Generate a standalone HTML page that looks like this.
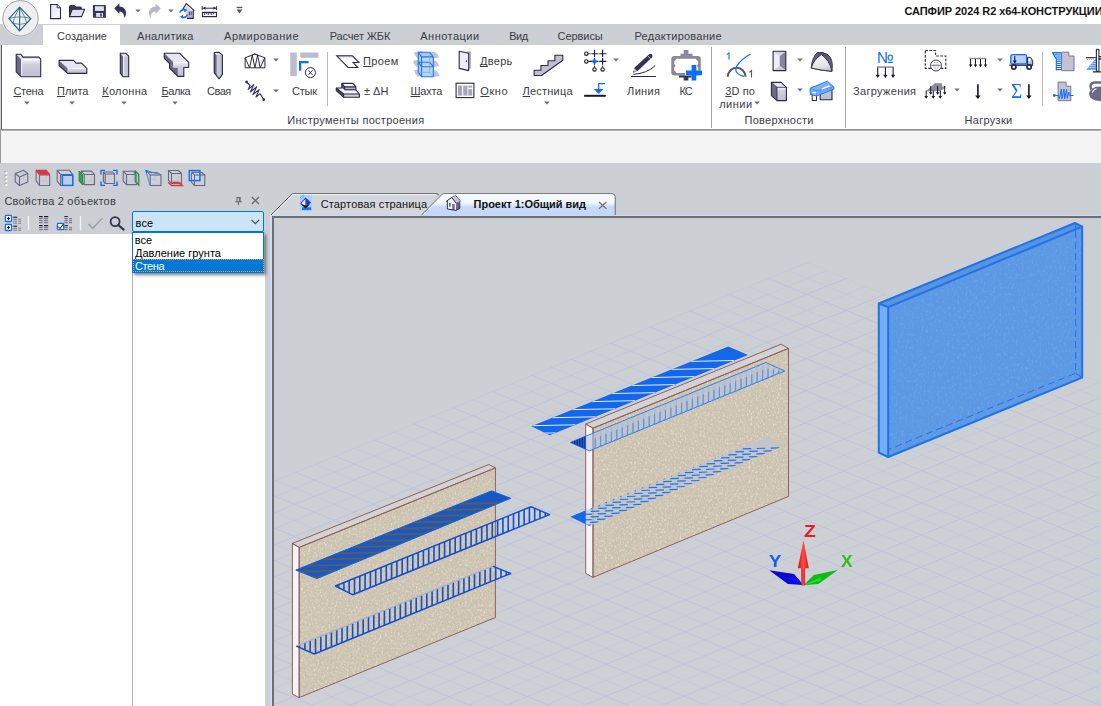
<!DOCTYPE html>
<html><head><meta charset="utf-8"><title>SAPFIR</title>
<style>
html,body{margin:0;padding:0;}
body{width:1101px;height:706px;overflow:hidden;position:relative;background:#cccfd4;font-family:"Liberation Sans",sans-serif;}
.b{position:absolute;display:block;}
.t{position:absolute;white-space:nowrap;font-family:"Liberation Sans",sans-serif;}
.t u{text-decoration:underline;text-underline-offset:1px;text-decoration-thickness:1px;text-decoration-skip-ink:none;}
</style></head><body>
<div class="b" style="left:0px;top:0px;width:1101px;height:24px;background:#ffffff;"></div>
<div class="b" style="left:0px;top:24px;width:1101px;height:21px;background:#cccfd4;"></div>
<div class="b" style="left:0px;top:45px;width:1101px;height:84px;background:#ffffff;"></div>
<div class="b" style="left:0px;top:45px;width:1px;height:84px;background:#d4d4d4;"></div>
<div class="b" style="left:1px;top:45px;width:1px;height:84px;background:#5a5a5a;"></div>
<div class="b" style="left:43px;top:25px;width:77px;height:21px;background:#ffffff;"></div>
<div class="b" style="left:0px;top:129px;width:1101px;height:1px;background:#8e8e8e;"></div>
<div class="b" style="left:0px;top:130px;width:1101px;height:1px;background:#b4b4b4;"></div>
<div class="b" style="left:0px;top:131px;width:1101px;height:32px;background:#f3f3f3;"></div>
<div class="b" style="left:0px;top:131px;width:1px;height:32px;background:#9a9a9a;"></div>
<div class="t" style="left:904.4px;top:5.24px;font-size:11px;line-height:12.64px;letter-spacing:0.000px;color:#151515;font-weight:bold;letter-spacing:-0.06px;">САПФИР 2024 R2 x64-КОНСТРУКЦИИ</div>
<div class="t" style="left:57.0px;top:30.24px;font-size:11px;line-height:12.64px;letter-spacing:0.048px;color:#3b3b45;">Создание</div>
<div class="t" style="left:137.1px;top:30.24px;font-size:11px;line-height:12.64px;letter-spacing:0.239px;color:#3b3b45;">Аналитика</div>
<div class="t" style="left:224.1px;top:30.24px;font-size:11px;line-height:12.64px;letter-spacing:0.484px;color:#3b3b45;">Армирование</div>
<div class="t" style="left:329.7px;top:30.24px;font-size:11px;line-height:12.64px;letter-spacing:-0.133px;color:#3b3b45;">Расчет ЖБК</div>
<div class="t" style="left:420.3px;top:30.24px;font-size:11px;line-height:12.64px;letter-spacing:0.468px;color:#3b3b45;">Аннотации</div>
<div class="t" style="left:509.2px;top:30.24px;font-size:11px;line-height:12.64px;letter-spacing:-0.400px;color:#3b3b45;">Вид</div>
<div class="t" style="left:557.6px;top:30.24px;font-size:11px;line-height:12.64px;letter-spacing:-0.068px;color:#3b3b45;">Сервисы</div>
<div class="t" style="left:634.5px;top:30.24px;font-size:11px;line-height:12.64px;letter-spacing:0.250px;color:#3b3b45;">Редактирование</div>
<div class="t" style="left:13.4px;top:84.74px;font-size:11px;line-height:12.64px;letter-spacing:-0.254px;color:#3b3b45;"><u>С</u>тена</div>
<div class="t" style="left:57.1px;top:84.74px;font-size:11px;line-height:12.64px;letter-spacing:-0.040px;color:#3b3b45;"><u>П</u>лита</div>
<div class="t" style="left:102.2px;top:84.74px;font-size:11px;line-height:12.64px;letter-spacing:0.284px;color:#3b3b45;"><u>К</u>олонна</div>
<div class="t" style="left:161.5px;top:84.74px;font-size:11px;line-height:12.64px;letter-spacing:-0.425px;color:#3b3b45;"><u>Б</u>алка</div>
<div class="t" style="left:207.0px;top:84.74px;font-size:11px;line-height:12.64px;letter-spacing:-0.510px;color:#3b3b45;">Свая</div>
<div class="t" style="left:292.0px;top:84.74px;font-size:11px;line-height:12.64px;letter-spacing:-0.225px;color:#3b3b45;">Стык</div>
<div class="t" style="left:364.0px;top:84.74px;font-size:11px;line-height:12.64px;letter-spacing:0.206px;color:#3b3b45;">± ΔH</div>
<div class="t" style="left:410.4px;top:84.74px;font-size:11px;line-height:12.64px;letter-spacing:-0.162px;color:#3b3b45;"><u>Ш</u>ахта</div>
<div class="t" style="left:480.3px;top:84.74px;font-size:11px;line-height:12.64px;letter-spacing:0.560px;color:#3b3b45;"><u>О</u>кно</div>
<div class="t" style="left:522.6px;top:84.74px;font-size:11px;line-height:12.64px;letter-spacing:0.211px;color:#3b3b45;"><u>Л</u>естница</div>
<div class="t" style="left:627.1px;top:84.74px;font-size:11px;line-height:12.64px;letter-spacing:0.332px;color:#3b3b45;">Линия</div>
<div class="t" style="left:679.4px;top:84.74px;font-size:11px;line-height:12.64px;letter-spacing:-1.014px;color:#3b3b45;">КС</div>
<div class="t" style="left:725.3px;top:84.74px;font-size:11px;line-height:12.64px;letter-spacing:0.102px;color:#3b3b45;"><u>3</u>D по</div>
<div class="t" style="left:853.0px;top:84.74px;font-size:11px;line-height:12.64px;letter-spacing:0.336px;color:#3b3b45;">Загружения</div>
<div class="t" style="left:363.1px;top:55.34px;font-size:11px;line-height:12.64px;letter-spacing:0.336px;color:#3b3b45;"><u>П</u>роем</div>
<div class="t" style="left:480.0px;top:55.34px;font-size:11px;line-height:12.64px;letter-spacing:0.293px;color:#3b3b45;"><u>Д</u>верь</div>
<div class="t" style="left:719.2px;top:97.64px;font-size:11px;line-height:12.64px;letter-spacing:0.495px;color:#3b3b45;">линии</div>
<div class="t" style="left:287.3px;top:113.74px;font-size:11px;line-height:12.64px;letter-spacing:0.287px;color:#3b3b45;">Инструменты построения</div>
<div class="t" style="left:744.6px;top:113.74px;font-size:11px;line-height:12.64px;letter-spacing:0.252px;color:#3b3b45;">Поверхности</div>
<div class="t" style="left:964.6px;top:113.74px;font-size:11px;line-height:12.64px;letter-spacing:0.279px;color:#3b3b45;">Нагрузки</div>
<svg class="b" style="left:24.3px;top:101.0px" width="6" height="4" viewBox="0 0 6 4"><path d="M0.3 0.5h5.4L3 3.4z" fill="#6e6e6e"/></svg>
<svg class="b" style="left:69.2px;top:101.0px" width="6" height="4" viewBox="0 0 6 4"><path d="M0.3 0.5h5.4L3 3.4z" fill="#6e6e6e"/></svg>
<svg class="b" style="left:121.3px;top:101.0px" width="6" height="4" viewBox="0 0 6 4"><path d="M0.3 0.5h5.4L3 3.4z" fill="#6e6e6e"/></svg>
<svg class="b" style="left:172.3px;top:101.0px" width="6" height="4" viewBox="0 0 6 4"><path d="M0.3 0.5h5.4L3 3.4z" fill="#6e6e6e"/></svg>
<svg class="b" style="left:544.3px;top:101.0px" width="6" height="4" viewBox="0 0 6 4"><path d="M0.3 0.5h5.4L3 3.4z" fill="#6e6e6e"/></svg>
<svg class="b" style="left:754.0px;top:101.0px" width="6" height="4" viewBox="0 0 6 4"><path d="M0.3 0.5h5.4L3 3.4z" fill="#6e6e6e"/></svg>
<svg class="b" style="left:273.3px;top:58.4px" width="6" height="4" viewBox="0 0 6 4"><path d="M0.3 0.5h5.4L3 3.4z" fill="#6e6e6e"/></svg>
<svg class="b" style="left:273.3px;top:88.6px" width="6" height="4" viewBox="0 0 6 4"><path d="M0.3 0.5h5.4L3 3.4z" fill="#6e6e6e"/></svg>
<svg class="b" style="left:613.4px;top:58.4px" width="6" height="4" viewBox="0 0 6 4"><path d="M0.3 0.5h5.4L3 3.4z" fill="#6e6e6e"/></svg>
<svg class="b" style="left:797.4px;top:58.4px" width="6" height="4" viewBox="0 0 6 4"><path d="M0.3 0.5h5.4L3 3.4z" fill="#6e6e6e"/></svg>
<svg class="b" style="left:797.4px;top:88.4px" width="6" height="4" viewBox="0 0 6 4"><path d="M0.3 0.5h5.4L3 3.4z" fill="#6e6e6e"/></svg>
<svg class="b" style="left:996.5px;top:58.4px" width="6" height="4" viewBox="0 0 6 4"><path d="M0.3 0.5h5.4L3 3.4z" fill="#6e6e6e"/></svg>
<svg class="b" style="left:996.5px;top:88.4px" width="6" height="4" viewBox="0 0 6 4"><path d="M0.3 0.5h5.4L3 3.4z" fill="#6e6e6e"/></svg>
<svg class="b" style="left:953.5px;top:88.4px" width="6" height="4" viewBox="0 0 6 4"><path d="M0.3 0.5h5.4L3 3.4z" fill="#6e6e6e"/></svg>
<div class="b" style="left:327px;top:52px;width:1px;height:54px;background:#b9b9b9;"></div>
<div class="b" style="left:1042px;top:52px;width:1px;height:54px;background:#b9b9b9;"></div>
<div class="b" style="left:711px;top:47px;width:1px;height:81px;background:#a6a6a6;"></div>
<div class="b" style="left:845px;top:47px;width:1px;height:81px;background:#a6a6a6;"></div>
<div class="b" style="left:0px;top:234px;width:265px;height:472px;background:#ffffff;"></div>
<div class="b" style="left:132px;top:234px;width:1px;height:472px;background:#b4b4b4;"></div>
<div class="t" style="left:4.4px;top:195.04px;font-size:11px;line-height:12.64px;letter-spacing:0.222px;color:#3b3b45;">Свойства 2 объектов</div>
<div class="b" style="left:132px;top:211px;width:132px;height:21px;background:#cce4f7;border:1px solid #0078d7;box-sizing:border-box;border-radius:2px;"></div>
<div class="t" style="left:135.6px;top:217.04px;font-size:11px;line-height:12.64px;letter-spacing:0.087px;color:#000;">все</div>
<svg class="b" style="left:251px;top:219px;" width="9" height="6" viewBox="0 0 9 6"><path d="M0.4 0.8L4.3 4.7L8.2 0.8" fill="none" stroke="#4a4a4a" stroke-width="1.2"/></svg>
<div class="b" style="left:132px;top:232px;width:132px;height:41px;background:#ffffff;border:1px solid #0078d7;box-sizing:border-box;box-shadow:2px 2px 3px rgba(0,0,0,0.5);"></div>
<div class="b" style="left:133px;top:259px;width:131px;height:13.4px;background:#0078d7;outline:1px dotted #f0a050;outline-offset:-1.5px;"></div>
<div class="t" style="left:134.7px;top:234.44px;font-size:11px;line-height:12.64px;letter-spacing:0.087px;color:#000;">все</div>
<div class="t" style="left:135.0px;top:247.44px;font-size:11px;line-height:12.64px;letter-spacing:0.020px;color:#000;">Давление грунта</div>
<div class="t" style="left:135.0px;top:260.34px;font-size:11px;line-height:12.64px;letter-spacing:-0.414px;color:#fff;">Стена</div>
<svg class="b" style="left:234px;top:196px;" width="9" height="10" viewBox="0 0 9 10"><path d="M2.5 1.5h4M3 1.5v4.2M6.2 1.5v4.2M5.3 1.5v4.2M1.2 5.8h6.6M4.5 5.8v3.4" fill="none" stroke="#686868" stroke-width="1"/></svg>
<svg class="b" style="left:251px;top:196px;" width="9" height="9" viewBox="0 0 9 9"><path d="M0.8 1L8 8M8 1L0.8 8" fill="none" stroke="#686868" stroke-width="1.35"/></svg>
<div class="b" style="left:270px;top:215px;width:831px;height:1.4px;background:#c9dcfa;"></div>
<div class="b" style="left:270px;top:215px;width:2.3px;height:491px;background:#c9dcfa;"></div>
<div class="b" style="left:272.3px;top:216.4px;width:829px;height:1.5px;background:#6e6e6e;"></div>
<div class="b" style="left:272.3px;top:216.4px;width:1.7px;height:490px;background:#6e6e6e;"></div>
<svg class="b" style="left:270px;top:191.5px;" width="348" height="24" viewBox="0 0 348 24"><defs><linearGradient id="gt2" x1="0" y1="0" x2="0" y2="1"><stop offset="0" stop-color="#f6fcff"/><stop offset="0.42" stop-color="#f2f8ff"/><stop offset="0.62" stop-color="#c6d9f8"/><stop offset="1" stop-color="#c3d7f8"/></linearGradient></defs>
<path d="M1 23L22.3 1.7H166.5Q168.6 1.7 167.6 3.4L151.5 23Z" fill="#d3d6db"/>
<path d="M1 23L22.3 1.7H166.5Q169 1.7 168 3.2" fill="none" stroke="#5e5e5e" stroke-width="1"/>
<path d="M2.4 23L22.8 2.7H166" fill="none" stroke="#f4f5f7" stroke-width="1"/>
<path d="M151.5 23.4L171.4 3.2Q172.6 1.7 174.6 1.7H342Q345.2 1.7 345.2 5V23.4Z" fill="url(#gt2)"/>
<path d="M151.5 23L171.4 3.2Q172.6 1.7 174.6 1.7H342Q345.2 1.7 345.2 5V23" fill="none" stroke="#6a6a6a" stroke-width="1"/>
<path d="M153 23L172 3.6Q173 2.7 174.6 2.7H341.6Q344.2 2.7 344.2 5" fill="none" stroke="#ffffff" stroke-width="0.9"/></svg>
<div class="t" style="left:320.7px;top:198.04px;font-size:11px;line-height:12.64px;letter-spacing:0.136px;color:#151515;">Стартовая страница</div>
<div class="t" style="left:473.6px;top:198.14px;font-size:11px;line-height:12.64px;letter-spacing:-0.034px;color:#101010;font-weight:bold;">Проект 1:Общий вид</div>
<svg class="b" style="left:598px;top:200.5px;" width="10" height="9" viewBox="0 0 10 9"><path d="M1 1L8.4 7.8M8.4 1L1 7.8" fill="none" stroke="#6f6f6f" stroke-width="1.2"/></svg>
<svg class="b" style="left:299px;top:194px;" width="14" height="18" viewBox="0 0 14 18"><rect x="1" y="1.1" width="12" height="15.7" fill="#a9d1ff"/>
<rect x="3" y="13.3" width="9.2" height="2.8" fill="#1e78f0"/>
<path d="M1 9.4L6.6 3.6L12 8.6L6.6 14Z" fill="#2338dc"/>
<path d="M2.4 9.3L6.4 5.2V12.6Z" fill="#f4f6ff"/>
<path d="M2 10.2L6.6 14.4L11 10.2L6.6 11.4Z" fill="#0e0e52"/>
<path d="M6.4 9.8L7.6 11.2" stroke="#e89030" stroke-width="1"/>
<path d="M1.4 3.6L4.4 0.8M3 4.2L4.8 2.4" stroke="#1e6ae0" stroke-width="0.9" stroke-dasharray="1 0.8"/></svg>
<svg class="b" style="left:445px;top:194px;" width="17" height="18" viewBox="0 0 17 18">
<path d="M1.2 7.3L6.7 3.5L11.2 9.2L10.9 16.4L2.3 15Z" fill="#f1f0f9"/>
<path d="M6.7 3.5L10.4 1.1L15.7 7.3L11.2 9.2Z" fill="#c4c3d8"/>
<path d="M11.2 9.2L14.8 8.3V14.5L10.9 16.4Z" fill="#65637f"/>
<rect x="4" y="8.9" width="1.7" height="3.7" fill="#6b6986"/><rect x="7.3" y="10" width="2.3" height="6" fill="#6b6986"/>
<g fill="none" stroke="#2b2945" stroke-width="1"><path d="M1.2 7.4L6.7 3.5L11.2 9.2"/><path d="M2.3 7V15L10.9 16.4"/></g>
<g fill="none" stroke="#2b2945" stroke-width="0.9" stroke-dasharray="1.2 0.7"><path d="M6.7 3.5L10.4 1.1L15.7 7.3L11.2 9.2"/></g>
<path d="M14.8 8.3V14.5L10.9 16.4" fill="none" stroke="#2b2945" stroke-width="0.9"/></svg>
<svg class="b" style="left:0px;top:0px;" width="42" height="40" viewBox="0 0 42 40">
<circle cx="20.5" cy="18.3" r="18.6" fill="#ffffff" opacity="0.55"/>
<circle cx="20.5" cy="18.3" r="17.7" fill="#efefef" stroke="#98a3b2" stroke-width="1"/>
<g fill="none" stroke="#2a6488" stroke-width="1.1" stroke-linejoin="round">
<path d="M19.6 7.2L30.8 18.6L19.6 30.8L9 18.6Z"/>
<path d="M19.6 7.2V30.8" />
</g>
<g fill="none" stroke="#2a6488" stroke-width="0.7">
<path d="M9 18.6Q19.6 15.2 30.8 18.6"/>
<path d="M13 23.2Q19.6 25.6 26.8 23.2"/>
<path d="M19.6 7.2L14.6 17.4L13 23.2L19.6 30.8"/>
<path d="M19.6 7.2L24.8 17.4L26.8 23.2L19.6 30.8"/>
<path d="M9 18.6L13 23.2M30.8 18.6L26.8 23.2"/>
</g></svg>
<svg class="b" style="left:49px;top:3px;" width="13" height="17" viewBox="0 0 13 17"><defs><linearGradient id="gnew" x1="0" y1="0" x2="1" y2="1"><stop offset="0" stop-color="#e4e4f2"/><stop offset="1" stop-color="#fbfbfe"/></linearGradient></defs>
<path d="M1.6 1.5H8.2L11.5 4.8V15.6H1.6Z" fill="url(#gnew)" stroke="#2d2a4f" stroke-width="1.1" stroke-linejoin="miter"/>
<path d="M8.2 1.5V4.8H11.5" fill="#fff" stroke="#2d2a4f" stroke-width="1"/></svg>
<svg class="b" style="left:68px;top:4px;" width="18" height="14" viewBox="0 0 18 14">
<path d="M1.5 12.3V2.4Q1.5 1.6 2.3 1.6H6.5L7.8 3H12.6Q13.3 3 13.3 3.8V5" fill="#3a3858" stroke="#2d2a4f" stroke-width="1"/>
<path d="M1.5 12.6L4.2 5.2H16.6L13.6 12.6Z" fill="#dedeec" stroke="#2d2a4f" stroke-width="1.1" stroke-linejoin="round"/></svg>
<svg class="b" style="left:92px;top:4px;" width="15" height="15" viewBox="0 0 15 15">
<rect x="0.9" y="1" width="13" height="12.8" rx="0.6" fill="#37355a"/>
<rect x="3" y="2.2" width="8.9" height="4.7" fill="#e0e0ee"/>
<rect x="4.1" y="9" width="6.9" height="3.9" fill="#dcdcea"/>
<rect x="8.2" y="9.5" width="1.6" height="3" fill="#37355a"/></svg>
<svg class="b" style="left:113px;top:2px;" width="15" height="18" viewBox="0 0 15 18">
<path d="M1.2 6.2L6.4 1.4V4.6C10.5 4.8 13 7.6 13 11.2C13 13.2 12.3 14.8 11.3 16C11.3 12.5 10 9.6 6.4 9.5V11.9Z" fill="#34325a"/></svg>
<svg class="b" style="left:134.6px;top:8.8px" width="6" height="4" viewBox="0 0 6 4"><path d="M0.3 0.5h5.4L3 3.4z" fill="#777"/></svg>
<svg class="b" style="left:147px;top:2px;" width="15" height="18" viewBox="0 0 15 18">
<path d="M13.8 6.2L8.6 1.4V4.6C4.5 4.8 2 7.6 2 11.2C2 13.2 2.7 14.8 3.7 16C3.7 12.5 5 9.6 8.6 9.5V11.9Z" fill="#b9b8c8"/></svg>
<svg class="b" style="left:167.5px;top:8.8px" width="6" height="4" viewBox="0 0 6 4"><path d="M0.3 0.5h5.4L3 3.4z" fill="#777"/></svg>
<svg class="b" style="left:178px;top:2px;" width="18" height="18" viewBox="0 0 18 18">
<path d="M4 8.6L8.3 1.6L16.4 8.6" fill="none" stroke="#2d2a4f" stroke-width="1.1"/>
<path d="M6.6 6.2L8.3 3.2L14.8 8.8V16H8.2V6.4Z" fill="#d8d8e6"/>
<path d="M9.4 9.2H14.8V16.2H9.4Z" fill="#b4b3c6"/>
<rect x="11" y="9.6" width="1.2" height="3.6" fill="#55536f"/><rect x="12.9" y="9.6" width="1" height="3.6" fill="#6a6885"/>
<path d="M15.3 8V16.4H9" fill="none" stroke="#2d2a4f" stroke-width="1.1"/>
<g fill="none" stroke="#1e72e8" stroke-width="1.7">
<path d="M2 10.6A4 4 0 0 1 7.6 8"/><path d="M9.4 12.4A4 4 0 0 1 3.6 15"/></g>
<path d="M6.2 6.2L9.6 8.3L6.4 10.2Z" fill="#1e72e8"/><path d="M5.2 16.8L1.8 14.7L5 12.8Z" fill="#1e72e8"/></svg>
<svg class="b" style="left:201px;top:5px;" width="17" height="13" viewBox="0 0 17 13">
<path d="M1.2 1.2V5M15.6 1.2V5M1.6 3.2H15.2" stroke="#2d2a4f" stroke-width="1" fill="none"/>
<path d="M1.8 3.2L4.6 1.6V4.8ZM15.2 3.2L12.4 1.6V4.8Z" fill="#2d2a4f"/>
<rect x="1.5" y="7.4" width="14" height="4.2" fill="#fff" stroke="#2d2a4f" stroke-width="1.2"/>
<path d="M3.6 8V10M5.4 8V9.3M7.2 8V10M9 8V9.3M10.8 8V10M12.6 8V9.3" stroke="#2d2a4f" stroke-width="0.9"/></svg>
<svg class="b" style="left:236px;top:6px;" width="7" height="8" viewBox="0 0 7 8"><rect x="0.7" y="0.8" width="5.6" height="1.4" fill="#555"/><path d="M0.6 3.6H6.4L3.5 7.4Z" fill="#555"/></svg>
<svg width="0" height="0" style="position:absolute"><defs><linearGradient id="gf" x1="0" y1="0" x2="1" y2="0"><stop offset="0" stop-color="#f4f4fa"/><stop offset="0.25" stop-color="#cfcede"/><stop offset="1" stop-color="#bcbbd0"/></linearGradient>
<linearGradient id="gv" x1="0" y1="0" x2="0" y2="1"><stop offset="0" stop-color="#f4f4fa"/><stop offset="0.3" stop-color="#cfcede"/><stop offset="1" stop-color="#c0bfd3"/></linearGradient></defs></svg>
<svg class="b" style="left:14px;top:52px;" width="29" height="27" viewBox="0 0 29 27"><polygon points="2.2,2.2 6.7,2.2 9.0,5.1 24.9,5.1 26.7,7.2 7.2,7.2" fill="#e6e6f1" /><polygon points="2.2,2.2 7.2,7.2 7.2,24.7 2.2,19.9" fill="#6b6986" /><polygon points="7.2,7.2 26.7,7.2 26.7,24.7 7.2,24.7" fill="url(#gv)" /><polygon points="2.2,2.2 6.7,2.2 9.0,5.1 24.9,5.1 26.7,7.2 26.7,24.7 7.2,24.7 2.2,19.9" fill="none" stroke="#2b2945" stroke-width="1.1" stroke-linejoin="round" /><path d="M7.699999999999999 24V7.799999999999997H26" fill="none" stroke="#fff" stroke-width="0.8" opacity="0.9"/></svg>
<svg class="b" style="left:57px;top:58px;" width="32" height="18" viewBox="0 0 32 18"><polygon points="2.1,2.4 16.6,2.4 19.1,5.1 24.6,5.1 29.8,10.3 10.5,10.3" fill="#e6e6f1" /><polygon points="10.5,10.3 29.8,10.3 29.8,15.4 10.5,15.4" fill="url(#gv)" /><polygon points="2.1,2.4 10.5,10.3 10.5,15.4 2.1,7.5" fill="#6b6986" /><polygon points="2.1,2.4 16.6,2.4 19.1,5.1 24.6,5.1 29.8,10.3 29.8,15.4 10.5,15.4 2.1,7.5" fill="none" stroke="#2b2945" stroke-width="1.1" stroke-linejoin="round" /></svg>
<svg class="b" style="left:118px;top:51px;" width="13" height="28" viewBox="0 0 13 28"><polygon points="2.3,2.3 7.7,2.3 10.7,5.2 5.0,5.2" fill="#e6e6f1" /><polygon points="2.3,2.3 5.0,5.2 5.0,25.7 2.3,22.2" fill="#6b6986" /><polygon points="5.0,5.2 10.7,5.2 10.7,25.7 5.0,25.7" fill="url(#gf)" /><polygon points="2.3,2.3 7.7,2.3 10.7,5.2 10.7,25.7 5.0,25.7 2.3,22.2" fill="none" stroke="#2b2945" stroke-width="1.1" stroke-linejoin="round" /></svg>
<svg class="b" style="left:162px;top:51px;" width="29" height="28" viewBox="0 0 29 28"><polygon points="2.3,2.3 17.8,2.3 26.7,11.3 11.4,11.3" fill="#e6e6f1" /><polygon points="2.3,2.3 11.4,11.3 11.4,16.5 2.3,7.3" fill="#6b6986" /><polygon points="7.6,12.4 11.4,16.5 15.9,16.5 15.9,25.4 7.6,17.0" fill="#6b6986" /><polygon points="11.4,11.3 26.7,11.3 26.7,16.5 21.8,16.5 21.8,25.4 15.9,25.4 15.9,16.5 11.4,16.5" fill="url(#gv)" /><polygon points="2.3,2.3 17.8,2.3 26.7,11.3 26.7,16.5 21.8,16.5 21.8,25.4 15.9,25.4 7.6,17.0 7.6,12.6 2.3,7.3" fill="none" stroke="#2b2945" stroke-width="1.1" stroke-linejoin="round" /></svg>
<svg class="b" style="left:212px;top:50px;" width="13" height="31" viewBox="0 0 13 31"><polygon points="2.2,2.5 6.7,2.2 10.4,4.9 10.4,24.3 7.1,28.8 2.2,22.6" fill="url(#gf)" /><polygon points="2.2,2.5 4.6,5.0 4.6,25.6 2.2,22.6" fill="#6b6986" /><polygon points="2.2,2.5 6.7,2.2 10.4,4.9 4.6,5.0" fill="#e6e6f1" /><polygon points="2.2,2.5 6.7,2.2 10.4,4.9 10.4,24.3 7.1,28.8 2.2,22.6" fill="none" stroke="#2b2945" stroke-width="1.1" stroke-linejoin="round" /></svg>
<svg class="b" style="left:243px;top:52px;" width="24" height="18" viewBox="0 0 24 18"><g fill="none" stroke="#2b2945" stroke-width="1" stroke-linejoin="round"><path d="M2.1 15.8V5.8L11.9 2L21.9 5.8V15.8Z"/><path d="M2.1 5.8L6.6 15.8L9.3 3.2M11.9 2L9.3 3.2M11.9 2L14.6 3.2L17.2 15.8L21.9 5.8M9.3 3.2L11.9 15.8L14.6 3.2"/></g></svg>
<svg class="b" style="left:244px;top:80px;" width="22" height="22" viewBox="0 0 22 22"><g fill="none" stroke="#34325a" stroke-width="1.1" stroke-linejoin="round"><path d="M2.6 2L6 5.5L4.2 9.4L9.8 4.6L6.4 12L12.6 6.8L9 14.6L15.2 9.6L12 17L16 13.6L19.8 19.7"/></g><circle cx="2.6" cy="2" r="1.4" fill="#34325a"/><circle cx="19.8" cy="19.7" r="1.4" fill="#34325a"/></svg>
<svg class="b" style="left:289px;top:51px;" width="31" height="28" viewBox="0 0 31 28"><rect x="1.3" y="1.5" width="6.5" height="23.6" fill="#bcbbd0"/><rect x="11.4" y="1.5" width="18" height="5.3" fill="#bcbbd0"/>
<path d="M11.1 19.8V11.2H19.6" fill="none" stroke="#0d6efd" stroke-width="2.3"/>
<circle cx="21.4" cy="21.6" r="5" fill="#fff" stroke="#2b2945" stroke-width="1"/>
<path d="M19.4 19.4L23.4 23.8M23.4 19.4L19.4 23.8" stroke="#2b2945" stroke-width="1" fill="none"/></svg>
<svg class="b" style="left:335px;top:54px;" width="26" height="16" viewBox="0 0 26 16"><path d="M1.8 2.6H17.3" stroke="#c9c8da" stroke-width="1.6"/>
<path d="M1.8 1.8H17.3L23.9 8.3L18.1 8.6L22.8 13.5H13Z" fill="none" stroke="#2b2945" stroke-width="1.1" stroke-linejoin="miter"/></svg>
<svg class="b" style="left:335px;top:82px;" width="26" height="17" viewBox="0 0 26 17"><polygon points="1.3,6.0 6.8,6.0 6.8,1.4 17.9,1.4 20.9,4.9 20.9,7.8 24.4,12.0 24.4,15.2 8.6,15.2 1.3,8.7" fill="#f2f2f8" /><polygon points="9.7,4.9 20.9,4.9 20.9,7.8 9.7,7.8" fill="#b5b4c7" /><polygon points="8.6,12.0 24.4,12.0 24.4,15.2 8.6,15.2" fill="#cfcedd" /><polygon points="1.3,6.0 8.6,12.0 8.6,15.2 1.3,8.7" fill="#55536f" /><polygon points="6.8,1.4 9.7,4.9 9.7,7.8 6.8,6.0" fill="#55536f" /><g fill="none" stroke="#2b2945" stroke-width="1.1" stroke-linejoin="round"><path d="M1.3 6.0 L6.8 6.0 L6.8 1.4 L17.9 1.4 L20.9 4.9 L20.9 7.8 L24.4 12.0 L24.4 15.2 L8.6 15.2 L1.3 8.7Z"/><path d="M9.7 7.8 L9.7 4.9 L20.9 4.9"/><path d="M6.8 1.4 L9.7 4.9"/><path d="M8.6 15.2 L8.6 12.0 L24.4 12.0"/><path d="M1.3 6.0 L8.6 12.0"/><path d="M9.7 7.8 L20.9 7.8"/></g></svg>
<svg class="b" style="left:411px;top:49px;" width="30" height="31" viewBox="0 0 30 31">
<g fill="#c3c2d2"><path d="M3 3.5Q9 1.5 14 3H24Q27 4.5 28 8.5Q22 10.5 17 9H6Q3.5 6.5 3 3.5Z"/>
<path d="M2 12Q8 10 13 11.5H24Q27 13 28 17Q22 19 17 17.5H5Q2.5 15 2 12Z"/>
<path d="M3 21.5Q9 19.5 14 21H24Q27 22.5 28.5 27Q22 29 17 27.5H6.5Q3.5 24.5 3 21.5Z"/></g>
<path d="M7.3 3.3H18.7L22.3 7.9V27.7H10.6L7.3 23.4Z" fill="#a8c8f6" opacity="0.85"/>
<path d="M10.6 7.9H22.3V27.7H10.6Z" fill="#c4dafa" opacity="0.6"/>
<g fill="none" stroke="#1e7af0" stroke-width="1.1" stroke-linejoin="round">
<path d="M7.3 3.3H18.7L22.3 7.9H10.6Z"/><path d="M10.6 7.9V27.7H22.3V7.9"/><path d="M7.3 3.3V23.4L10.6 27.7"/>
<path d="M7.3 13.3L10.6 17.7H22.3"/><path d="M7.3 13.3H18.7L22.3 17.7"/></g>
<g fill="none" stroke="#6fa6f2" stroke-width="0.7"><path d="M18.7 3.3V23.4L22.3 27.7M7.3 23.4H18.7"/></g></svg>
<svg class="b" style="left:457px;top:50px;" width="16" height="22" viewBox="0 0 16 22"><rect x="9.5" y="1.3" width="4.5" height="17.4" fill="#b8b7c9"/>
<path d="M2.2 1.3L11.7 3.3V20.6L2.2 18.4Z" fill="#eeeef6" stroke="#2b2945" stroke-width="1.1" stroke-linejoin="round"/>
<path d="M9.4 10.2V12" stroke="#2b2945" stroke-width="0.9"/></svg>
<svg class="b" style="left:455px;top:82px;" width="20" height="17" viewBox="0 0 20 17"><rect x="1.1" y="1.2" width="17.8" height="14.4" fill="#fff" stroke="#2b2945" stroke-width="1.1"/>
<g fill="#a6a5b9"><rect x="3" y="3.6" width="4" height="10"/><rect x="8.2" y="3.6" width="4.3" height="10"/><rect x="13.3" y="3.6" width="3.9" height="2"/><rect x="13.3" y="7.1" width="3.9" height="6.5"/></g></svg>
<svg class="b" style="left:532px;top:53px;" width="33" height="25" viewBox="0 0 33 25"><polygon points="2.1,22.5 2.1,17.2 8.9,17.2 8.9,12.5 16.0,12.5 16.0,7.8 22.9,7.8 22.9,2.2 30.8,2.2 30.8,7.2 9.5,22.5" fill="#c1c0d3" stroke="#2b2945" stroke-width="1.1" stroke-linejoin="round" /></svg>
<svg class="b" style="left:583px;top:48px;" width="25" height="25" viewBox="0 0 25 25"><g fill="none" stroke="#1f1d33" stroke-width="1.15"><path d="M5.2000000000000455 5.700000000000003H23.399999999999977M5.2000000000000455 13.399999999999999H23.399999999999977M11.5 1.7999999999999972V19.5M19.600000000000023 1.7999999999999972V19.5"/><circle cx="3.3" cy="5.7" r="1.7" fill="#fff"/><circle cx="3.3" cy="13.4" r="1.7" fill="#fff"/><circle cx="11.5" cy="21.4" r="1.7" fill="#fff"/><circle cx="19.6" cy="21.4" r="1.7" fill="#fff"/></g><path d="M15.8 3V16M7.9 3.5V8M8 9.5H23.6M8 17.299999999999997H23.6" stroke="#fff" stroke-width="0.9" fill="none"/><path d="M11.5 10.600000000000001L14.3 13.4L11.5 16.2L8.7 13.4Z" fill="#0d6efd"/></svg>
<svg class="b" style="left:583px;top:82px;" width="24" height="16" viewBox="0 0 24 16"><path d="M1.1 13.8H22.7" stroke="#1a1830" stroke-width="2"/>
<path d="M15.7 7.4V1.6H22" fill="none" stroke="#0d6efd" stroke-width="1.2"/><path d="M10.9 7.1H20.4L15.7 11.9Z" fill="#0d6efd"/></svg>
<svg class="b" style="left:630px;top:52px;" width="28" height="27" viewBox="0 0 28 27"><path d="M1.1 24.5H25.9" stroke="#2b2945" stroke-width="1"/>
<path d="M3.5 22.3Q17 21.5 25.3 13.5" fill="none" stroke="#2b2945" stroke-width="1"/>
<path d="M3.2 20.4L4.6 15.6L19.2 2.2Q20.6 1.2 22 2.6Q23.2 4 22 5.4L7.6 19Z" fill="#34325a"/>
<path d="M3.2 20.4L4.4 16.4L7 18.9Z" fill="#d9d8e6"/><path d="M3.2 20.4L3.7 18.8L4.9 19.9Z" fill="#34325a"/>
<path d="M17.6 3.6L20.6 6.8" stroke="#d9d8e6" stroke-width="0.8"/></svg>
<svg class="b" style="left:669px;top:48px;" width="35" height="34" viewBox="0 0 35 34">
<path d="M14.7 2.1H19.4V5.7H23.5V8H11.5V5.7H14.7Z" fill="#8a899c"/>
<path d="M2.3 11Q2.3 8 5.3 8H28.8Q31.8 8 31.8 11V24.5Q31.8 27.5 28.8 27.5H5.3Q2.3 27.5 2.3 24.5Z" fill="#8a899c"/>
<path d="M5.2 13.4L7.8 10.8H26.6L29.2 13.4V16L28.2 17V18.4L29.2 19.4V22.3L26.6 24.9H7.8L5.2 22.3V19.4L6.2 18.4V17L5.2 16Z" fill="#fff"/>
<path d="M10 27.5H24V29.5H19.4V32.5H14.7V29.5H10Z" fill="#34325a"/>
<path d="M22.6 17.1H16.0V27.3H22.6V33.5H27.3V27.3H34V22.6H27.3V17.1Z" fill="#fff"/>
<path d="M22.6 17.1H27.3V22.6H33V27.3H27.3V32.5H22.6V27.3H17V22.6H22.6Z" fill="#0d6efd"/></svg>
<svg class="b" style="left:725px;top:50px;" width="30" height="30" viewBox="0 0 30 30">
<path d="M2.8 26.7A8.85 8.85 0 0 1 20.5 26.7" fill="none" stroke="#55536f" stroke-width="2"/>
<path d="M25.7 4Q15.5 9.5 11.6 16.4Q9.6 20.4 12.6 23.4Q15.4 25.8 19 26.4" fill="none" stroke="#0d6efd" stroke-width="1.2"/>
<path d="M1.9 4.6L4 2.9V9.6" fill="none" stroke="#0d6efd" stroke-width="1.1"/>
<path d="M24.4 22.4L26.5 20.7V27.6" fill="none" stroke="#55536f" stroke-width="1.1"/></svg>
<svg class="b" style="left:772px;top:50px;" width="15" height="22" viewBox="0 0 15 22"><polygon points="1.1,1.3 7.7,6.0 7.7,16.0 1.1,20.6" fill="#efeef8" /><polygon points="13.8,1.3 7.7,6.0 7.7,16.0 13.8,20.6" fill="#86849c" /><polygon points="1.1,1.3 13.8,1.3 7.7,6.0" fill="#d4d3e2" /><polygon points="1.1,20.6 13.8,20.6 7.7,16.0" fill="#cdccdc" /><polygon points="1.1,1.3 13.8,1.3 13.8,20.6 1.1,20.6" fill="none" stroke="#2b2945" stroke-width="1.1" stroke-linejoin="round" /></svg>
<svg class="b" style="left:809px;top:50px;" width="26" height="24" viewBox="0 0 26 24"><defs><linearGradient id="gd" x1="0.3" y1="0" x2="0.6" y2="1"><stop offset="0" stop-color="#f6f6f9"/><stop offset="0.7" stop-color="#e3e3ea"/><stop offset="1" stop-color="#c4c4cf"/></linearGradient>
<linearGradient id="gdk" x1="0" y1="0" x2="1" y2="0"><stop offset="0" stop-color="#77758f"/><stop offset="0.5" stop-color="#4a4863"/><stop offset="1" stop-color="#6b6986"/></linearGradient></defs>
<path d="M2.2 18Q3.2 7 8.5 2.5Q13 1.6 18 4.2Q24.8 8 23 21.3Q12 20.6 2.2 18Z" fill="url(#gdk)" stroke="#2b2945" stroke-width="0.9" stroke-linejoin="round"/>
<path d="M2.2 18Q5 9 12.4 4.6Q20.5 10 23 21.3Q11 20.4 2.2 18Z" fill="url(#gd)" stroke="#2b2945" stroke-width="0.9" stroke-linejoin="round"/></svg>
<svg class="b" style="left:770px;top:81px;" width="18" height="21" viewBox="0 0 18 21"><polygon points="1.4,1.4 11.1,1.4 16.4,6.3 7.0,6.3" fill="#e6e6f1" /><polygon points="1.4,1.4 7.0,6.3 7.0,19.6 1.4,14.6" fill="#6b6986" /><polygon points="7.0,6.3 16.4,6.3 16.4,19.6 7.0,19.6" fill="url(#gv)" /><polygon points="1.4,1.4 11.1,1.4 16.4,6.3 16.4,19.6 7.0,19.6 1.4,14.6" fill="none" stroke="#2b2945" stroke-width="1.1" stroke-linejoin="round" /><path d="M1.4 1.4L7 6.3H16.4M7 6.3V19.6" fill="none" stroke="#2b2945" stroke-width="0.8"/></svg>
<svg class="b" style="left:808px;top:79px;" width="28" height="23" viewBox="0 0 28 23">
<rect x="4.2" y="13.2" width="4.3" height="8.3" fill="#fff" stroke="#2b2945" stroke-width="1"/>
<path d="M12.2 9.7V20.8H24V8" fill="#c1c0d3" stroke="#2b2945" stroke-width="1.1"/>
<path d="M2.1 9.3L19.4 2.2L25.9 8.1V10.1L8.5 17.1L2.3 15.5Z" fill="#6aa5f8" fill-opacity="0.85" stroke="#1e7af0" stroke-width="1" stroke-linejoin="round"/>
<path d="M2.1 9.3L8.5 11.6L25.9 8.1M8.5 11.6V17.1" fill="none" stroke="#3d8bf4" stroke-width="0.8"/>
<path d="M13.6 10.1L21.7 6.9" stroke="#ffffff" stroke-width="1.5"/>
<path d="M4.2 13.6H8.4" stroke="#ffffff" stroke-width="1.2"/></svg>
<div class="t" style="left:876.6px;top:49.12px;font-size:16px;line-height:18.38px;letter-spacing:0.236px;color:#0d6efd;text-decoration:none;">№</div>
<svg class="b" style="left:874px;top:64px;" width="23" height="15" viewBox="0 0 23 15"><rect x="2.9" y="2.3" width="16.9" height="1.5" fill="#8a899c"/><path d="M3.7 3.6V12.9" stroke="#17152b" stroke-width="1.1" fill="none"/><path d="M1.6 10.7H5.8L3.7 13.9Z" fill="#17152b"/><path d="M11.4 3.6V12.9" stroke="#17152b" stroke-width="1.1" fill="none"/><path d="M9.3 10.7H13.5L11.4 13.9Z" fill="#17152b"/><path d="M19.1 3.6V12.9" stroke="#17152b" stroke-width="1.1" fill="none"/><path d="M17.0 10.7H21.2L19.1 13.9Z" fill="#17152b"/></svg>
<svg class="b" style="left:923px;top:48px;" width="26" height="26" viewBox="0 0 26 26"><path d="M2.3 2.5H12.6V8H22.8V20.4H2.3Z" fill="none" stroke="#2b2945" stroke-width="1.1" stroke-dasharray="2.6 1.5"/>
<circle cx="13" cy="17.5" r="5.5" fill="#fff" stroke="#2b2945" stroke-width="0.9"/>
<path d="M8.6 17.4H17.4" stroke="#8a899c" stroke-width="1.5"/><path d="M11 14.6H15M10.4 20H15.6" stroke="#8a899c" stroke-width="0.8" stroke-dasharray="1 0.6"/></svg>
<svg class="b" style="left:923px;top:81px;" width="25" height="19" viewBox="0 0 25 19"><polygon points="2.9,10.3 11.8,2.3 19.0,2.3 19.0,5.6 22.4,5.6 22.4,7.0 16.5,10.3" fill="#8a899c" /><path d="M7.7 5.0V12.8" stroke="#17152b" stroke-width="1" fill="none"/><path d="M6.0 11.2H9.4L7.7 13.8Z" fill="#17152b"/><path d="M14.6 5.0V12.8" stroke="#17152b" stroke-width="1" fill="none"/><path d="M12.9 11.2H16.3L14.6 13.8Z" fill="#17152b"/><path d="M21.7 5.0V12.8" stroke="#17152b" stroke-width="1" fill="none"/><path d="M20.0 11.2H23.4L21.7 13.8Z" fill="#17152b"/><path d="M3.2 9.5V16.7" stroke="#17152b" stroke-width="1" fill="none"/><path d="M1.4 14.9H5.0L3.2 17.7Z" fill="#17152b"/><path d="M10.3 9.5V16.7" stroke="#17152b" stroke-width="1" fill="none"/><path d="M8.5 14.9H12.1L10.3 17.7Z" fill="#17152b"/><path d="M17.3 9.5V16.7" stroke="#17152b" stroke-width="1" fill="none"/><path d="M15.5 14.9H19.1L17.3 17.7Z" fill="#17152b"/></svg>
<svg class="b" style="left:968px;top:56px;" width="20" height="13" viewBox="0 0 20 13"><rect x="1.6" y="1.8" width="16.8" height="1.4" fill="#8a899c"/><path d="M2.6 3.0V10.2" stroke="#17152b" stroke-width="1" fill="none"/><path d="M0.9 8.6H4.3L2.6 11.2Z" fill="#17152b"/><path d="M7.5 3.0V10.2" stroke="#17152b" stroke-width="1" fill="none"/><path d="M5.8 8.6H9.2L7.5 11.2Z" fill="#17152b"/><path d="M12.5 3.0V10.2" stroke="#17152b" stroke-width="1" fill="none"/><path d="M10.8 8.6H14.2L12.5 11.2Z" fill="#17152b"/><path d="M17.5 3.0V10.2" stroke="#17152b" stroke-width="1" fill="none"/><path d="M15.8 8.6H19.2L17.5 11.2Z" fill="#17152b"/></svg>
<svg class="b" style="left:1008px;top:52px;" width="27" height="20" viewBox="0 0 27 20">
<path d="M1.3 13.2H24.8" stroke="#2b2945" stroke-width="1.3"/>
<rect x="2.8" y="2.6" width="15.8" height="9.4" rx="1.6" fill="#b7d1fa" stroke="#0d6efd" stroke-width="1.3"/>
<path d="M19.4 5.4H22.6L24.7 8.6V13H19.4Z" fill="#b5b4c6" stroke="#2b2945" stroke-width="1"/>
<rect x="20.7" y="6.3" width="1.7" height="3.2" fill="#fff"/>
<path d="M6.8 4.2V10.4" stroke="#17152b" stroke-width="1.1" fill="none"/><path d="M4.9 8.6H8.7L6.8 11.4Z" fill="#17152b"/>
<circle cx="5.8" cy="15" r="2.1" fill="#fff" stroke="#2b2945" stroke-width="1.8"/><circle cx="21.1" cy="15" r="2.1" fill="#fff" stroke="#2b2945" stroke-width="1.8"/></svg>
<svg class="b" style="left:974px;top:83px;" width="8" height="17" viewBox="0 0 8 17"><path d="M3.9 1.2V15.1" stroke="#17152b" stroke-width="1.6" fill="none"/><path d="M1.2 12.5H6.6L3.9 16.1Z" fill="#17152b"/></svg>
<div class="t" style="left:1010.8px;top:79.2px;font-family:'Liberation Serif',serif;font-size:21px;line-height:24px;color:#0d6efd;transform:scaleX(0.92);transform-origin:0 0;">Σ</div>
<svg class="b" style="left:1025px;top:83px;" width="8" height="17" viewBox="0 0 8 17"><path d="M3.9 1.2V15.1" stroke="#17152b" stroke-width="1.6" fill="none"/><path d="M1.2 12.5H6.6L3.9 16.1Z" fill="#17152b"/></svg>
<svg class="b" style="left:1051px;top:50px;" width="25" height="23" viewBox="0 0 25 23"><polygon points="10.6,2.2 17.8,2.2 17.8,6.0 23.0,6.0 23.0,20.7 10.6,20.7" fill="#c4c3d5" stroke="#77758f" stroke-width="1" stroke-linejoin="round" /><path d="M1.5 2.8H10.2" stroke="#0d6efd" stroke-width="1.5"/><path d="M2.8 4.9H10.2" stroke="#0d6efd" stroke-width="1.15"/><path d="M4.1 7.0H10.2" stroke="#0d6efd" stroke-width="1.15"/><path d="M5.3 9.1H10.2" stroke="#0d6efd" stroke-width="1.15"/><path d="M5.3 11.2H10.2" stroke="#0d6efd" stroke-width="1.15"/><path d="M5.3 13.3H10.2" stroke="#0d6efd" stroke-width="1.15"/><path d="M5.3 15.4H10.2" stroke="#0d6efd" stroke-width="1.15"/><path d="M5.3 17.5H10.2" stroke="#0d6efd" stroke-width="1.15"/><path d="M5.3 19.6H10.2" stroke="#0d6efd" stroke-width="1.15"/><path d="M1.2 2.3L5.3 9.0V20.4" fill="none" stroke="#0d6efd" stroke-width="1.1"/></svg>
<svg class="b" style="left:1084px;top:48px;" width="17" height="26" viewBox="0 0 17 26"><path d="M2.2 9.6H12" stroke="#2b2945" stroke-width="1"/><path d="M2.6 10.2l1.1 1.5M4.6 10.2l1.1 1.5M6.6 10.2l1.1 1.5M8.6 10.2l1.1 1.5" stroke="#2b2945" stroke-width="0.6"/>
<path d="M2.2 21.8L12.2 10V21.8Z" fill="#4d95f7"/>
<path d="M4.4 19.6H12M6 17.6H12M7.8 15.6H12M9.6 13.6H12" stroke="#dce9fd" stroke-width="0.7"/>
<rect x="12.4" y="1.4" width="2.5" height="21.8" fill="#fff" stroke="#2b2945" stroke-width="1.1"/>
<path d="M9 23.9H17M14.9 8.7H17M14.9 11H17" stroke="#2b2945" stroke-width="1.3" fill="none"/></svg>
<svg class="b" style="left:1052px;top:81px;" width="23" height="21" viewBox="0 0 23 21"><polygon points="6.1,1.1 14.1,1.1 14.1,5.2 18.8,5.2 18.8,19.7 6.1,19.7" fill="#c4c3d5" stroke="#77758f" stroke-width="1" stroke-linejoin="round" /><path d="M2.3 14.5H6.6L7.4 17.6L9.4 8L10.0 17.8L12.0 8L12.6 17.8L14.6 8.4L15.2 17.4L16.8 11.0L17.4 14.5H21.5" fill="none" stroke="#0d6efd" stroke-width="1" stroke-linejoin="round"/><circle cx="2.3" cy="14.5" r="1.4" fill="#0d6efd"/></svg>
<svg class="b" style="left:1086px;top:79px;" width="15" height="24" viewBox="0 0 15 24"><path d="M5.2 10.5Q2.6 3.6 9 3.5H15" fill="none" stroke="#6b6986" stroke-width="2.5"/>
<ellipse cx="13.4" cy="14.8" rx="10.4" ry="7.2" fill="#6b6986"/><path d="M6.4 13.2Q7.4 10.6 10 9.8" fill="none" stroke="#e8e7f0" stroke-width="1.3" stroke-linecap="round"/></svg>
<svg class="b" style="left:0;top:0" width="212" height="192" viewBox="0 0 212 192"><rect x="4.6" y="171" width="2" height="2" fill="#9ea3ab"/><rect x="5.4" y="171.8" width="2" height="2" fill="#fff"/><rect x="4.6" y="175" width="2" height="2" fill="#9ea3ab"/><rect x="5.4" y="175.8" width="2" height="2" fill="#fff"/><rect x="4.6" y="179" width="2" height="2" fill="#9ea3ab"/><rect x="5.4" y="179.8" width="2" height="2" fill="#fff"/><rect x="4.6" y="183" width="2" height="2" fill="#9ea3ab"/><rect x="5.4" y="183.8" width="2" height="2" fill="#fff"/><g fill="none" stroke="#c3c2d6" stroke-width="0.9"><path d="M23.5 170.2V178.6L15.2 181.8M23.5 178.6L27.8 182"/></g><g fill="none" stroke="#6b6986" stroke-width="1.1" stroke-linejoin="round"><path d="M15.2 173.5L23.5 170.2L27.8 173.5V182L19.5 185.5L15.2 181.8Z"/><path d="M15.2 173.5L19.5 177L27.8 173.5M19.5 177V185.5"/></g><path d="M46.300000000000004 170.4V180.9H36.1M46.300000000000004 180.9L49.7 185.5" fill="none" stroke="#c3c2d6" stroke-width="0.9"/><g fill="none" stroke="#6b6986" stroke-width="1.1" stroke-linejoin="round"><rect x="39.5" y="175" width="10.2" height="10.5"/><path d="M39.5 175L36.1 170.4H46.300000000000004L49.7 175M36.1 170.4V180.9L39.5 185.5"/></g><path d="M36.2 170.4H46.4L49.7 174.4H39.5Z" fill="#e8323c" stroke="#e8323c" stroke-width="0.8"/><g fill="none" stroke="#6b6986" stroke-width="1.1" stroke-linejoin="round"><rect x="60.6" y="174.6" width="12.2" height="10.9"/><path d="M60.6 174.6L57.2 170.2H69.39999999999999L72.8 174.6M57.2 170.2V181.1L60.6 185.5"/></g><rect x="62.4" y="175.3" width="10.3" height="10.1" fill="#bccdf4" stroke="#0d6efd" stroke-width="1.4"/><path d="M91.5 171.1V181.2H81.2M91.5 181.2L94.5 184.6" fill="none" stroke="#c3c2d6" stroke-width="0.9"/><g fill="none" stroke="#6b6986" stroke-width="1.1" stroke-linejoin="round"><rect x="84.2" y="174.5" width="10.3" height="10.1"/><path d="M84.2 174.5L81.2 171.1H91.5L94.5 174.5M81.2 171.1V181.2L84.2 184.6"/></g><path d="M79.1 171L82.6 174.8V185L79.1 181Z" fill="#35a055" stroke="#1f8f43" stroke-width="1"/><g fill="none" stroke="#6b6986" stroke-width="1.1" stroke-linejoin="round"><rect x="105.2" y="174" width="9.3" height="9.5"/><path d="M105.2 174L103.4 172H112.7L114.5 174M103.4 172V181.5L105.2 183.5"/></g><g fill="none" stroke="#0d6efd" stroke-width="1.4"><path d="M101 174.4V170.4H105M113 170.4H117V174.4M117 181.4V185.4H113M105 185.4H101V181.4"/></g><path d="M133.2 171.2V181.29999999999998H123.2M133.2 181.29999999999998L136.5 184.6" fill="none" stroke="#c3c2d6" stroke-width="0.9"/><g fill="none" stroke="#6b6986" stroke-width="1.1" stroke-linejoin="round"><rect x="126.5" y="174.5" width="10.0" height="10.1"/><path d="M126.5 174.5L123.2 171.2H133.2L136.5 174.5M123.2 171.2V181.29999999999998L126.5 184.6"/></g><path d="M135.2 171L138.8 174.6V185L135.2 181.5Z" fill="#9fb5a8" fill-opacity="0.5" stroke="#1f8f43" stroke-width="1.2"/><g fill="none" stroke="#c3c2d6" stroke-width="0.9"><path d="M155 179.5L161 185.5M155 179.5V175M155 179.5H150.2"/></g><rect x="150.2" y="175" width="10.8" height="10.5" fill="none" stroke="#6b6986" stroke-width="1.1"/><path d="M148 172.6H157.4L161 175M148 172.6L150.2 175" fill="none" stroke="#6b6986" stroke-width="1"/><g fill="none" stroke="#3a83f2" stroke-width="1"><path d="M145.6 170.2L150.2 185.5M145.6 170.2L161 175"/></g><path d="M145.2 169.8L148.6 171.6L146.4 173.4Z" fill="#0d6efd"/><path d="M178.5 170.5V180.4H168.5M178.5 180.4L181.5 183.4" fill="none" stroke="#c3c2d6" stroke-width="0.9"/><g fill="none" stroke="#6b6986" stroke-width="1.1" stroke-linejoin="round"><rect x="171.5" y="173.5" width="10.0" height="9.9"/><path d="M171.5 173.5L168.5 170.5H178.5L181.5 173.5M168.5 170.5V180.4L171.5 183.4"/></g><path d="M168.2 182.2L171.6 185.5H182.2L178.6 182.2" fill="none" stroke="#e8323c" stroke-width="1.5"/><path d="M172.5 182.4H179" stroke="#e8323c" stroke-width="1.4"/><rect x="189.3" y="170.6" width="10.6" height="10" fill="#c8d9fa" stroke="#0d6efd" stroke-width="1.5"/><g fill="none" stroke="#6b6986" stroke-width="1.1"><rect x="194.5" y="175" width="10.3" height="10.5"/><path d="M191.5 172.4H201.6L204.8 175M191.5 172.4V182.4L194.5 185.5M191.5 172.4L194.5 175"/></g></svg>
<svg class="b" style="left:0;top:0" width="130" height="236" viewBox="0 0 130 236"><rect x="5.4" y="215.4" width="6.1" height="6.1" rx="0.8" fill="#fff" stroke="#0d6efd" stroke-width="1.3"/><path d="M6.9 218.45000000000002H10M8.45 216.9V220.0" stroke="#000" stroke-width="1.1"/><path d="M13.2 217.20000000000002H17.1" stroke="#1f1d33" stroke-width="1.1"/><path d="M13.2 219.20000000000002H17.1M18.3 219.20000000000002H21" stroke="#7c7b90" stroke-width="1"/><path d="M13.2 221.20000000000002H17.1M18.3 221.20000000000002H21" stroke="#7c7b90" stroke-width="1"/><path d="M13.2 223.20000000000002H17.1M18.3 223.20000000000002H21" stroke="#7c7b90" stroke-width="1"/><rect x="5.4" y="224.4" width="6.1" height="6.1" rx="0.8" fill="#fff" stroke="#0d6efd" stroke-width="1.3"/><path d="M6.9 227.45000000000002H10M8.45 225.9V229.0" stroke="#000" stroke-width="1.1"/><path d="M13.2 226.20000000000002H17.1" stroke="#1f1d33" stroke-width="1.1"/><path d="M13.2 228.20000000000002H17.1M18.3 228.20000000000002H21" stroke="#7c7b90" stroke-width="1"/><path d="M13.2 230.20000000000002H17.1M18.3 230.20000000000002H21" stroke="#7c7b90" stroke-width="1"/><rect x="27.8" y="216" width="1.4" height="14" fill="#f3f3f5"/><rect x="79.8" y="216" width="1.4" height="14" fill="#f3f3f5"/><path d="M39 216.6H42.7M43.9 216.6H48.2" stroke="#1f1d33" stroke-width="1.05"/><path d="M39 218.6H42.7M43.9 218.6H48.2" stroke="#7c7b90" stroke-width="1.05"/><path d="M39 220.6H42.7M43.9 220.6H48.2" stroke="#7c7b90" stroke-width="1.05"/><path d="M39 222.6H42.7M43.9 222.6H48.2" stroke="#7c7b90" stroke-width="1.05"/><path d="M39 225.6H42.7M43.9 225.6H48.2" stroke="#1f1d33" stroke-width="1.05"/><path d="M39 227.6H42.7M43.9 227.6H48.2" stroke="#7c7b90" stroke-width="1.05"/><path d="M39 229.6H42.7M43.9 229.6H48.2" stroke="#7c7b90" stroke-width="1.05"/><path d="M64.4 216.6H67.9" stroke="#1f1d33" stroke-width="1.05"/><path d="M64.4 218.6H67.9M69 218.6H72" stroke="#7c7b90" stroke-width="1.05"/><path d="M64.4 220.6H67.9M69 220.6H72" stroke="#7c7b90" stroke-width="1.05"/><path d="M64.4 222.6H67.9M69 222.6H72" stroke="#7c7b90" stroke-width="1.05"/><path d="M64.4 225.6H67.9" stroke="#1f1d33" stroke-width="1.05"/><path d="M64.4 227.6H67.9M69 227.6H72" stroke="#7c7b90" stroke-width="1.05"/><path d="M64.4 229.6H67.9M69 229.6H72" stroke="#7c7b90" stroke-width="1.05"/><rect x="57.4" y="223.4" width="6.3" height="6.3" rx="0.8" fill="#fff" stroke="#0d6efd" stroke-width="1.3"/><path d="M58.4 226.6L60 228.6L63.2 224.2" fill="none" stroke="#000" stroke-width="1"/><path d="M88 224.4L89.4 223.4L92.6 227.2L101.8 218L102.8 218.6L92.9 229.6Z" fill="#9d9cae"/><circle cx="115.1" cy="221.6" r="4.5" fill="none" stroke="#34325a" stroke-width="1.8"/><path d="M118.3 225L123.6 229.6" stroke="#34325a" stroke-width="2.3" stroke-linecap="round"/></svg>
<svg class="b" style="left:274px;top:218px" width="827" height="488" viewBox="274 218 827 488"><defs>
<linearGradient id="vbg" x1="0" y1="0" x2="0" y2="1"><stop offset="0" stop-color="#cbced3"/><stop offset="1" stop-color="#cdd0d5"/></linearGradient>
<filter id="stone" x="0" y="0" width="100%" height="100%" color-interpolation-filters="sRGB">
 <feTurbulence type="fractalNoise" baseFrequency="0.55 0.42" numOctaves="2" seed="7" result="n"/>
 <feColorMatrix in="n" type="matrix" values="0 0 0 0 0  0 0 0 0 0  0 0 0 0 0  1.6 1.6 0 0 -1.55" result="a"/>
 <feFlood flood-color="#e8e1d8" result="lt"/><feComposite in="lt" in2="a" operator="in" result="spk"/>
 <feTurbulence type="fractalNoise" baseFrequency="0.45 0.4" numOctaves="2" seed="23" result="n2"/>
 <feColorMatrix in="n2" type="matrix" values="0 0 0 0 0  0 0 0 0 0  0 0 0 0 0  0 1.2 1.2 0 -1.2" result="a2"/>
 <feFlood flood-color="#c2b9a7" result="dk"/><feComposite in="dk" in2="a2" operator="in" result="dks"/>
 <feMerge><feMergeNode in="SourceGraphic"/><feMergeNode in="dks"/><feMergeNode in="spk"/></feMerge>
 <feComposite in2="SourceGraphic" operator="in"/>
</filter>
<filter id="bluestone" x="0" y="0" width="100%" height="100%" color-interpolation-filters="sRGB">
 <feTurbulence type="fractalNoise" baseFrequency="0.5 0.3" numOctaves="2" seed="11" result="n"/>
 <feColorMatrix in="n" type="matrix" values="0 0 0 0 0  0 0 0 0 0  0 0 0 0 0  1.4 1.4 0 0 -1.35" result="a"/>
 <feFlood flood-color="#6fa6ea" result="lt"/><feComposite in="lt" in2="a" operator="in" result="spk"/>
 <feMerge><feMergeNode in="SourceGraphic"/><feMergeNode in="spk"/></feMerge>
 <feComposite in2="SourceGraphic" operator="in"/>
</filter>
</defs><rect x="274" y="218" width="827" height="488" fill="url(#vbg)"/><clipPath id="gridclip"><polygon points="807.2,262.3 274.0,481.0 274.0,706.0 1101.0,706.0 1101.0,382.8"/></clipPath><g fill="none" clip-path="url(#gridclip)"><path d="M274 129.7L1101 -209.4" stroke="#b2b0e6" stroke-opacity="0.38" stroke-width="1"/><path d="M274 -214.9L1101 124.2" stroke="#b2b0e6" stroke-opacity="0.38" stroke-width="1"/><path d="M274 145.6L1101 -193.4" stroke="#b2b0e6" stroke-opacity="0.18" stroke-width="1"/><path d="M274 -198.7L1101 140.4" stroke="#b2b0e6" stroke-opacity="0.18" stroke-width="1"/><path d="M274 161.6L1101 -177.5" stroke="#b2b0e6" stroke-opacity="0.38" stroke-width="1"/><path d="M274 -182.6L1101 156.5" stroke="#b2b0e6" stroke-opacity="0.38" stroke-width="1"/><path d="M274 177.6L1101 -161.5" stroke="#b2b0e6" stroke-opacity="0.18" stroke-width="1"/><path d="M274 -166.4L1101 172.7" stroke="#b2b0e6" stroke-opacity="0.18" stroke-width="1"/><path d="M274 193.5L1101 -145.5" stroke="#b2b0e6" stroke-opacity="0.38" stroke-width="1"/><path d="M274 -150.3L1101 188.8" stroke="#b2b0e6" stroke-opacity="0.38" stroke-width="1"/><path d="M274 209.5L1101 -129.6" stroke="#b2b0e6" stroke-opacity="0.18" stroke-width="1"/><path d="M274 -134.1L1101 205.0" stroke="#b2b0e6" stroke-opacity="0.18" stroke-width="1"/><path d="M274 225.5L1101 -113.6" stroke="#b2b0e6" stroke-opacity="0.38" stroke-width="1"/><path d="M274 -118.0L1101 221.1" stroke="#b2b0e6" stroke-opacity="0.38" stroke-width="1"/><path d="M274 241.4L1101 -97.6" stroke="#b2b0e6" stroke-opacity="0.18" stroke-width="1"/><path d="M274 -101.8L1101 237.3" stroke="#b2b0e6" stroke-opacity="0.18" stroke-width="1"/><path d="M274 257.4L1101 -81.7" stroke="#b2b0e6" stroke-opacity="0.38" stroke-width="1"/><path d="M274 -85.7L1101 253.4" stroke="#b2b0e6" stroke-opacity="0.38" stroke-width="1"/><path d="M274 273.4L1101 -65.7" stroke="#b2b0e6" stroke-opacity="0.18" stroke-width="1"/><path d="M274 -69.5L1101 269.6" stroke="#b2b0e6" stroke-opacity="0.18" stroke-width="1"/><path d="M274 289.4L1101 -49.7" stroke="#b2b0e6" stroke-opacity="0.38" stroke-width="1"/><path d="M274 -53.4L1101 285.7" stroke="#b2b0e6" stroke-opacity="0.38" stroke-width="1"/><path d="M274 305.3L1101 -33.7" stroke="#b2b0e6" stroke-opacity="0.18" stroke-width="1"/><path d="M274 -37.2L1101 301.9" stroke="#b2b0e6" stroke-opacity="0.18" stroke-width="1"/><path d="M274 321.3L1101 -17.8" stroke="#b2b0e6" stroke-opacity="0.38" stroke-width="1"/><path d="M274 -21.1L1101 318.0" stroke="#b2b0e6" stroke-opacity="0.38" stroke-width="1"/><path d="M274 337.3L1101 -1.8" stroke="#b2b0e6" stroke-opacity="0.18" stroke-width="1"/><path d="M274 -4.9L1101 334.2" stroke="#b2b0e6" stroke-opacity="0.18" stroke-width="1"/><path d="M274 353.2L1101 14.2" stroke="#b2b0e6" stroke-opacity="0.38" stroke-width="1"/><path d="M274 11.2L1101 350.3" stroke="#b2b0e6" stroke-opacity="0.38" stroke-width="1"/><path d="M274 369.2L1101 30.1" stroke="#b2b0e6" stroke-opacity="0.18" stroke-width="1"/><path d="M274 27.4L1101 366.5" stroke="#b2b0e6" stroke-opacity="0.18" stroke-width="1"/><path d="M274 385.2L1101 46.1" stroke="#b2b0e6" stroke-opacity="0.38" stroke-width="1"/><path d="M274 43.5L1101 382.6" stroke="#b2b0e6" stroke-opacity="0.38" stroke-width="1"/><path d="M274 401.2L1101 62.1" stroke="#b2b0e6" stroke-opacity="0.18" stroke-width="1"/><path d="M274 59.7L1101 398.8" stroke="#b2b0e6" stroke-opacity="0.18" stroke-width="1"/><path d="M274 417.1L1101 78.0" stroke="#b2b0e6" stroke-opacity="0.38" stroke-width="1"/><path d="M274 75.8L1101 414.9" stroke="#b2b0e6" stroke-opacity="0.38" stroke-width="1"/><path d="M274 433.1L1101 94.0" stroke="#b2b0e6" stroke-opacity="0.18" stroke-width="1"/><path d="M274 92.0L1101 431.1" stroke="#b2b0e6" stroke-opacity="0.18" stroke-width="1"/><path d="M274 449.1L1101 110.0" stroke="#b2b0e6" stroke-opacity="0.38" stroke-width="1"/><path d="M274 108.1L1101 447.2" stroke="#b2b0e6" stroke-opacity="0.38" stroke-width="1"/><path d="M274 465.0L1101 126.0" stroke="#b2b0e6" stroke-opacity="0.18" stroke-width="1"/><path d="M274 124.3L1101 463.4" stroke="#b2b0e6" stroke-opacity="0.18" stroke-width="1"/><path d="M274 481.0L1101 141.9" stroke="#b2b0e6" stroke-opacity="0.38" stroke-width="1"/><path d="M274 140.4L1101 479.5" stroke="#b2b0e6" stroke-opacity="0.38" stroke-width="1"/><path d="M274 497.0L1101 157.9" stroke="#b2b0e6" stroke-opacity="0.18" stroke-width="1"/><path d="M274 156.6L1101 495.7" stroke="#b2b0e6" stroke-opacity="0.18" stroke-width="1"/><path d="M274 512.9L1101 173.9" stroke="#b2b0e6" stroke-opacity="0.38" stroke-width="1"/><path d="M274 172.7L1101 511.8" stroke="#b2b0e6" stroke-opacity="0.38" stroke-width="1"/><path d="M274 528.9L1101 189.8" stroke="#b2b0e6" stroke-opacity="0.18" stroke-width="1"/><path d="M274 188.9L1101 528.0" stroke="#b2b0e6" stroke-opacity="0.18" stroke-width="1"/><path d="M274 544.9L1101 205.8" stroke="#b2b0e6" stroke-opacity="0.38" stroke-width="1"/><path d="M274 205.0L1101 544.1" stroke="#b2b0e6" stroke-opacity="0.38" stroke-width="1"/><path d="M274 560.8L1101 221.8" stroke="#b2b0e6" stroke-opacity="0.18" stroke-width="1"/><path d="M274 221.2L1101 560.3" stroke="#b2b0e6" stroke-opacity="0.18" stroke-width="1"/><path d="M274 576.8L1101 237.8" stroke="#b2b0e6" stroke-opacity="0.38" stroke-width="1"/><path d="M274 237.3L1101 576.4" stroke="#b2b0e6" stroke-opacity="0.38" stroke-width="1"/><path d="M274 592.8L1101 253.7" stroke="#b2b0e6" stroke-opacity="0.18" stroke-width="1"/><path d="M274 253.5L1101 592.6" stroke="#b2b0e6" stroke-opacity="0.18" stroke-width="1"/><path d="M274 608.8L1101 269.7" stroke="#b2b0e6" stroke-opacity="0.38" stroke-width="1"/><path d="M274 269.6L1101 608.7" stroke="#b2b0e6" stroke-opacity="0.38" stroke-width="1"/><path d="M274 624.7L1101 285.7" stroke="#b2b0e6" stroke-opacity="0.18" stroke-width="1"/><path d="M274 285.8L1101 624.9" stroke="#b2b0e6" stroke-opacity="0.18" stroke-width="1"/><path d="M274 640.7L1101 301.6" stroke="#b2b0e6" stroke-opacity="0.38" stroke-width="1"/><path d="M274 301.9L1101 641.0" stroke="#b2b0e6" stroke-opacity="0.38" stroke-width="1"/><path d="M274 656.7L1101 317.6" stroke="#b2b0e6" stroke-opacity="0.18" stroke-width="1"/><path d="M274 318.1L1101 657.2" stroke="#b2b0e6" stroke-opacity="0.18" stroke-width="1"/><path d="M274 672.6L1101 333.6" stroke="#b2b0e6" stroke-opacity="0.38" stroke-width="1"/><path d="M274 334.2L1101 673.3" stroke="#b2b0e6" stroke-opacity="0.38" stroke-width="1"/><path d="M274 688.6L1101 349.5" stroke="#b2b0e6" stroke-opacity="0.18" stroke-width="1"/><path d="M274 350.4L1101 689.5" stroke="#b2b0e6" stroke-opacity="0.18" stroke-width="1"/><path d="M274 704.6L1101 365.5" stroke="#b2b0e6" stroke-opacity="0.38" stroke-width="1"/><path d="M274 366.5L1101 705.6" stroke="#b2b0e6" stroke-opacity="0.38" stroke-width="1"/><path d="M274 720.5L1101 381.5" stroke="#b2b0e6" stroke-opacity="0.18" stroke-width="1"/><path d="M274 382.7L1101 721.8" stroke="#b2b0e6" stroke-opacity="0.18" stroke-width="1"/><path d="M274 736.5L1101 397.4" stroke="#b2b0e6" stroke-opacity="0.38" stroke-width="1"/><path d="M274 398.8L1101 737.9" stroke="#b2b0e6" stroke-opacity="0.38" stroke-width="1"/><path d="M274 752.5L1101 413.4" stroke="#b2b0e6" stroke-opacity="0.18" stroke-width="1"/><path d="M274 415.0L1101 754.1" stroke="#b2b0e6" stroke-opacity="0.18" stroke-width="1"/><path d="M274 768.5L1101 429.4" stroke="#b2b0e6" stroke-opacity="0.38" stroke-width="1"/><path d="M274 431.1L1101 770.2" stroke="#b2b0e6" stroke-opacity="0.38" stroke-width="1"/><path d="M274 784.4L1101 445.4" stroke="#b2b0e6" stroke-opacity="0.18" stroke-width="1"/><path d="M274 447.3L1101 786.4" stroke="#b2b0e6" stroke-opacity="0.18" stroke-width="1"/><path d="M274 800.4L1101 461.3" stroke="#b2b0e6" stroke-opacity="0.38" stroke-width="1"/><path d="M274 463.4L1101 802.5" stroke="#b2b0e6" stroke-opacity="0.38" stroke-width="1"/><path d="M274 816.4L1101 477.3" stroke="#b2b0e6" stroke-opacity="0.18" stroke-width="1"/><path d="M274 479.6L1101 818.7" stroke="#b2b0e6" stroke-opacity="0.18" stroke-width="1"/><path d="M274 832.3L1101 493.3" stroke="#b2b0e6" stroke-opacity="0.38" stroke-width="1"/><path d="M274 495.7L1101 834.8" stroke="#b2b0e6" stroke-opacity="0.38" stroke-width="1"/><path d="M274 848.3L1101 509.2" stroke="#b2b0e6" stroke-opacity="0.18" stroke-width="1"/><path d="M274 511.9L1101 851.0" stroke="#b2b0e6" stroke-opacity="0.18" stroke-width="1"/><path d="M274 864.3L1101 525.2" stroke="#b2b0e6" stroke-opacity="0.38" stroke-width="1"/><path d="M274 528.0L1101 867.1" stroke="#b2b0e6" stroke-opacity="0.38" stroke-width="1"/><path d="M274 880.2L1101 541.2" stroke="#b2b0e6" stroke-opacity="0.18" stroke-width="1"/><path d="M274 544.2L1101 883.3" stroke="#b2b0e6" stroke-opacity="0.18" stroke-width="1"/><path d="M274 896.2L1101 557.1" stroke="#b2b0e6" stroke-opacity="0.38" stroke-width="1"/><path d="M274 560.3L1101 899.4" stroke="#b2b0e6" stroke-opacity="0.38" stroke-width="1"/><path d="M274 912.2L1101 573.1" stroke="#b2b0e6" stroke-opacity="0.18" stroke-width="1"/><path d="M274 576.5L1101 915.6" stroke="#b2b0e6" stroke-opacity="0.18" stroke-width="1"/><path d="M274 928.2L1101 589.1" stroke="#b2b0e6" stroke-opacity="0.38" stroke-width="1"/><path d="M274 592.6L1101 931.7" stroke="#b2b0e6" stroke-opacity="0.38" stroke-width="1"/><path d="M274 944.1L1101 605.1" stroke="#b2b0e6" stroke-opacity="0.18" stroke-width="1"/><path d="M274 608.8L1101 947.9" stroke="#b2b0e6" stroke-opacity="0.18" stroke-width="1"/><path d="M274 960.1L1101 621.0" stroke="#b2b0e6" stroke-opacity="0.38" stroke-width="1"/><path d="M274 624.9L1101 964.0" stroke="#b2b0e6" stroke-opacity="0.38" stroke-width="1"/><path d="M274 976.1L1101 637.0" stroke="#b2b0e6" stroke-opacity="0.18" stroke-width="1"/><path d="M274 641.1L1101 980.2" stroke="#b2b0e6" stroke-opacity="0.18" stroke-width="1"/><path d="M274 992.0L1101 653.0" stroke="#b2b0e6" stroke-opacity="0.38" stroke-width="1"/><path d="M274 657.2L1101 996.3" stroke="#b2b0e6" stroke-opacity="0.38" stroke-width="1"/><path d="M274 1008.0L1101 668.9" stroke="#b2b0e6" stroke-opacity="0.18" stroke-width="1"/><path d="M274 673.4L1101 1012.5" stroke="#b2b0e6" stroke-opacity="0.18" stroke-width="1"/><path d="M274 1024.0L1101 684.9" stroke="#b2b0e6" stroke-opacity="0.38" stroke-width="1"/><path d="M274 689.5L1101 1028.6" stroke="#b2b0e6" stroke-opacity="0.38" stroke-width="1"/><path d="M274 1040.0L1101 700.9" stroke="#b2b0e6" stroke-opacity="0.18" stroke-width="1"/><path d="M274 705.7L1101 1044.8" stroke="#b2b0e6" stroke-opacity="0.18" stroke-width="1"/><path d="M274 1055.9L1101 716.9" stroke="#b2b0e6" stroke-opacity="0.38" stroke-width="1"/><path d="M274 721.8L1101 1060.9" stroke="#b2b0e6" stroke-opacity="0.38" stroke-width="1"/><path d="M274 1071.9L1101 732.8" stroke="#b2b0e6" stroke-opacity="0.18" stroke-width="1"/><path d="M274 738.0L1101 1077.1" stroke="#b2b0e6" stroke-opacity="0.18" stroke-width="1"/><path d="M274 1087.9L1101 748.8" stroke="#b2b0e6" stroke-opacity="0.38" stroke-width="1"/><path d="M274 754.1L1101 1093.2" stroke="#b2b0e6" stroke-opacity="0.38" stroke-width="1"/><path d="M274 1103.8L1101 764.8" stroke="#b2b0e6" stroke-opacity="0.18" stroke-width="1"/><path d="M274 770.3L1101 1109.4" stroke="#b2b0e6" stroke-opacity="0.18" stroke-width="1"/><path d="M274 1119.8L1101 780.7" stroke="#b2b0e6" stroke-opacity="0.38" stroke-width="1"/><path d="M274 786.4L1101 1125.5" stroke="#b2b0e6" stroke-opacity="0.38" stroke-width="1"/><path d="M274 1135.8L1101 796.7" stroke="#b2b0e6" stroke-opacity="0.18" stroke-width="1"/><path d="M274 802.6L1101 1141.7" stroke="#b2b0e6" stroke-opacity="0.18" stroke-width="1"/><path d="M274 1151.7L1101 812.7" stroke="#b2b0e6" stroke-opacity="0.38" stroke-width="1"/><path d="M274 818.7L1101 1157.8" stroke="#b2b0e6" stroke-opacity="0.38" stroke-width="1"/><path d="M274 1167.7L1101 828.6" stroke="#b2b0e6" stroke-opacity="0.18" stroke-width="1"/><path d="M274 834.9L1101 1174.0" stroke="#b2b0e6" stroke-opacity="0.18" stroke-width="1"/><path d="M274 1183.7L1101 844.6" stroke="#b2b0e6" stroke-opacity="0.38" stroke-width="1"/><path d="M274 851.0L1101 1190.1" stroke="#b2b0e6" stroke-opacity="0.38" stroke-width="1"/><path d="M274 1199.7L1101 860.6" stroke="#b2b0e6" stroke-opacity="0.18" stroke-width="1"/><path d="M274 867.2L1101 1206.3" stroke="#b2b0e6" stroke-opacity="0.18" stroke-width="1"/><path d="M274 1215.6L1101 876.6" stroke="#b2b0e6" stroke-opacity="0.38" stroke-width="1"/><path d="M274 883.3L1101 1222.4" stroke="#b2b0e6" stroke-opacity="0.38" stroke-width="1"/><path d="M274 1231.6L1101 892.5" stroke="#b2b0e6" stroke-opacity="0.18" stroke-width="1"/><path d="M274 899.5L1101 1238.6" stroke="#b2b0e6" stroke-opacity="0.18" stroke-width="1"/><path d="M274 1247.6L1101 908.5" stroke="#b2b0e6" stroke-opacity="0.38" stroke-width="1"/><path d="M274 915.6L1101 1254.7" stroke="#b2b0e6" stroke-opacity="0.38" stroke-width="1"/><path d="M274 1263.5L1101 924.5" stroke="#b2b0e6" stroke-opacity="0.18" stroke-width="1"/><path d="M274 931.8L1101 1270.9" stroke="#b2b0e6" stroke-opacity="0.18" stroke-width="1"/><path d="M274 1279.5L1101 940.4" stroke="#b2b0e6" stroke-opacity="0.38" stroke-width="1"/><path d="M274 947.9L1101 1287.0" stroke="#b2b0e6" stroke-opacity="0.38" stroke-width="1"/><path d="M274 1295.5L1101 956.4" stroke="#b2b0e6" stroke-opacity="0.18" stroke-width="1"/><path d="M274 964.1L1101 1303.2" stroke="#b2b0e6" stroke-opacity="0.18" stroke-width="1"/><path d="M274 1311.4L1101 972.4" stroke="#b2b0e6" stroke-opacity="0.38" stroke-width="1"/><path d="M274 980.2L1101 1319.3" stroke="#b2b0e6" stroke-opacity="0.38" stroke-width="1"/><path d="M274 1327.4L1101 988.3" stroke="#b2b0e6" stroke-opacity="0.18" stroke-width="1"/><path d="M274 996.4L1101 1335.5" stroke="#b2b0e6" stroke-opacity="0.18" stroke-width="1"/><path d="M274 1343.4L1101 1004.3" stroke="#b2b0e6" stroke-opacity="0.38" stroke-width="1"/><path d="M274 1012.5L1101 1351.6" stroke="#b2b0e6" stroke-opacity="0.38" stroke-width="1"/><path d="M274 1359.4L1101 1020.3" stroke="#b2b0e6" stroke-opacity="0.18" stroke-width="1"/><path d="M274 1028.7L1101 1367.8" stroke="#b2b0e6" stroke-opacity="0.18" stroke-width="1"/><path d="M274 1375.3L1101 1036.2" stroke="#b2b0e6" stroke-opacity="0.38" stroke-width="1"/><path d="M274 1044.8L1101 1383.9" stroke="#b2b0e6" stroke-opacity="0.38" stroke-width="1"/><path d="M274 1391.3L1101 1052.2" stroke="#b2b0e6" stroke-opacity="0.18" stroke-width="1"/><path d="M274 1061.0L1101 1400.1" stroke="#b2b0e6" stroke-opacity="0.18" stroke-width="1"/></g><polygon points="531.3,426.2 549.7,435.3 748.0,354.9 728.2,346.4" fill="#1467e8"/><clipPath id="cp1"><polygon points="531.3,426.2 549.7,435.3 748.0,354.9 728.2,346.4"/></clipPath><g clip-path="url(#cp1)"><path d="M555.6 432.9L512.7 433.7M575.5 424.8L532.5 425.7M595.3 416.8L552.4 417.7M615.1 408.8L572.2 409.6M635.0 400.7L592.0 401.6M654.8 392.7L611.9 393.5M674.6 384.6L631.7 385.5M694.5 376.6L651.5 377.5M714.3 368.6L671.4 369.4M734.1 360.5L691.2 361.4" fill="none" stroke="#e4edff" stroke-width="1.0"/></g><polygon points="593.0,428.2 788.5,348.4 788.5,496.4 593.0,577.4" fill="#cdc4b1" filter="url(#stone)"/><polygon points="585.7,424.0 781.1,344.2 788.5,348.4 593.0,428.2" fill="#d3d3d6"/><polygon points="585.7,424.0 593.0,428.2 593.0,577.4 585.7,573.4" fill="#f6f5f5"/><g fill="none" stroke="#8e625d" stroke-width="1" stroke-linejoin="round"><polygon points="593.0,428.2 788.5,348.4 788.5,496.4 593.0,577.4"/><polygon points="585.7,424.0 781.1,344.2 788.5,348.4 593.0,428.2"/><polygon points="585.7,424.0 593.0,428.2 593.0,577.4 585.7,573.4"/></g><polygon points="570.4,442.4 589.3,450.9 784.8,371.0 765.9,362.5" fill="#b4c2d8" fill-opacity="0.62" stroke="#2f7fee" stroke-width="1"/><path d="M595.2 438.4V448.5h-1.6M600.6 436.2V446.3h-1.6M606.0 434.0V444.1h-1.6M611.4 431.8V441.9h-1.6M616.8 429.6V439.6h-1.6M622.2 427.4V437.4h-1.6M627.6 425.2V435.2h-1.6M633.0 423.0V433.0h-1.6M638.4 420.8V430.8h-1.6M643.8 418.6V428.6h-1.6M649.2 416.3V426.4h-1.6M654.6 414.1V424.2h-1.6M660.0 411.9V422.0h-1.6M665.4 409.7V419.8h-1.6M670.8 407.5V417.6h-1.6M676.2 405.3V415.4h-1.6M681.6 403.1V413.2h-1.6M687.0 400.9V411.0h-1.6M692.4 398.7V408.7h-1.6M697.8 396.5V406.5h-1.6M703.2 394.3V404.3h-1.6M708.6 392.1V402.1h-1.6M714.0 389.9V399.9h-1.6M719.4 387.7V397.7h-1.6M724.8 385.4V395.5h-1.6M730.2 383.2V393.3h-1.6M735.6 381.0V391.1h-1.6M741.0 378.8V388.9h-1.6M746.4 376.6V386.7h-1.6M751.8 374.4V384.5h-1.6M757.2 372.2V382.3h-1.6M762.6 370.0V380.1h-1.6M768.0 368.9V377.8h-1.6M773.4 369.6V375.6h-1.6M778.8 370.3V373.4h-1.6" fill="none" stroke="#2a7af0" stroke-width="1.0"/><path d="M595.2 432.2V448.5h-1.6M600.6 430.0V446.3h-1.6M606.0 427.8V444.1h-1.6M611.4 425.6V441.9h-1.6M616.8 423.4V439.6h-1.6M622.2 421.2V437.4h-1.6M627.6 419.0V435.2h-1.6M633.0 416.8V433.0h-1.6M638.4 414.6V430.8h-1.6M643.8 412.4V428.6h-1.6M649.2 410.2V426.4h-1.6M654.6 408.0V424.2h-1.6M660.0 405.8V422.0h-1.6M665.4 403.6V419.8h-1.6M670.8 401.4V417.6h-1.6M676.2 399.1V415.4h-1.6M681.6 396.9V413.2h-1.6M687.0 394.7V411.0h-1.6M692.4 392.5V408.7h-1.6M697.8 390.3V406.5h-1.6M703.2 388.1V404.3h-1.6M708.6 385.9V402.1h-1.6M714.0 383.7V399.9h-1.6M719.4 381.5V397.7h-1.6M724.8 379.3V395.5h-1.6M730.2 377.1V393.3h-1.6M735.6 374.9V391.1h-1.6M741.0 372.7V388.9h-1.6M746.4 370.5V386.7h-1.6M751.8 368.2V384.5h-1.6M757.2 366.0V382.3h-1.6M762.6 363.8V380.1h-1.6M768.0 363.5V377.8h-1.6M773.4 365.9V375.6h-1.6M778.8 368.3V373.4h-1.6" fill="none" stroke="#8fb0e6" stroke-width="1.0" stroke-opacity="0.45"/><polygon points="570.4,516.8 589.3,525.9 784.8,445.5 766.4,437.0" fill="#bfc4cc" fill-opacity="0.75"/><clipPath id="cp2"><polygon points="570.4,516.8 589.3,525.9 784.8,445.5 766.4,437.0"/></clipPath><g clip-path="url(#cp2)"><path d="M569.5 534.1L524.7 535.4M576.7 531.1L532.0 532.4M583.9 528.1L539.3 529.4M591.2 525.1L546.6 526.5M598.4 522.2L554.0 523.5M605.6 519.2L561.3 520.5M612.9 516.2L568.6 517.5M620.1 513.2L575.9 514.6M627.3 510.3L583.2 511.6M634.6 507.3L590.5 508.6M641.8 504.3L597.8 505.6M649.0 501.3L605.1 502.7M656.3 498.4L612.5 499.7M663.5 495.4L619.8 496.7M670.7 492.4L627.1 493.7M678.0 489.4L634.4 490.7M685.2 486.5L641.7 487.8M692.4 483.5L649.0 484.8M699.7 480.5L656.3 481.8M706.9 477.5L663.6 478.8M714.1 474.6L671.0 475.9M721.4 471.6L678.3 472.9M728.6 468.6L685.6 469.9M735.8 465.6L692.9 466.9M743.1 462.7L700.2 464.0M750.3 459.7L707.5 461.0M757.5 456.7L714.8 458.0M764.8 453.7L722.1 455.0M772.0 450.8L729.5 452.0M779.2 447.8L736.8 449.1" fill="none" stroke="#1e74f0" stroke-width="1.2" stroke-dasharray="8.5 5.5"/></g><polygon points="570.4,442.4 585.7,449.3 585.7,436.1" fill="#1a5fd6"/><clipPath id="cp3"><polygon points="570.4,442.4 585.7,449.3 585.7,436.1"/></clipPath><g clip-path="url(#cp3)"><path d="M572.0 441.8V443.1M574.6 440.7V444.3M577.2 439.6V445.4M579.8 438.6V446.6M582.4 437.5V447.8M585.0 436.4V448.9" fill="none" stroke="#12307a" stroke-width="1.2"/></g><polygon points="570.4,516.8 585.7,524.2 585.7,510.6" fill="#1467e8"/><polygon points="299.2,547.4 495.4,467.9 495.4,617.5 299.2,697.6" fill="#cdc4b1" filter="url(#stone)"/><polygon points="292.4,543.4 488.8,464.5 495.4,467.9 299.2,547.4" fill="#d3d3d6"/><polygon points="292.4,543.4 299.2,547.4 299.2,697.6 292.4,694.1" fill="#f6f5f5"/><g fill="none" stroke="#8e625d" stroke-width="1" stroke-linejoin="round"><polygon points="299.2,547.4 495.4,467.9 495.4,617.5 299.2,697.6"/><polygon points="292.4,543.4 488.8,464.5 495.4,467.9 299.2,547.4"/><polygon points="292.4,543.4 299.2,547.4 299.2,697.6 292.4,694.1"/></g><polygon points="295.8,570.1 316.9,578.6 510.7,498.3 491.5,490.9" fill="#1a57c6"/><clipPath id="cp4"><polygon points="295.8,570.1 316.9,578.6 510.7,498.3 491.5,490.9"/></clipPath><g clip-path="url(#cp4)"><path d="M320.5 577.1L276.3 578.0M335.4 570.9L291.6 571.8M350.3 564.8L306.8 565.6M365.2 558.6L322.1 559.4M380.1 552.4L337.4 553.3M395.0 546.2L352.7 547.1M409.9 540.1L368.0 540.9M424.8 533.9L383.2 534.7M439.7 527.7L398.5 528.5M454.6 521.5L413.8 522.3M469.6 515.3L429.1 516.2M484.5 509.2L444.4 510.0M499.4 503.0L459.7 503.8" fill="none" stroke="#5f5f49" stroke-width="1.8"/></g><polygon points="295.8,570.1 316.9,578.6 510.7,498.3 491.5,490.9" fill="none" stroke="#1460e0" stroke-width="1"/><path d="M338.6 584.7V587.6M343.9 582.6V590.3M349.2 580.4V593.0M354.5 578.3V593.9M359.8 576.1V591.8M365.1 574.0V589.6M370.4 571.8V587.5M375.7 569.7V585.3M381.0 567.5V583.2M386.3 565.4V581.0M391.6 563.2V578.8M396.9 561.1V576.7M402.2 558.9V574.5M407.5 556.8V572.4M412.8 554.6V570.2M418.1 552.5V568.1M423.4 550.3V565.9M428.7 548.2V563.8M434.0 546.0V561.6M439.3 543.9V559.4M444.6 541.7V557.3M449.9 539.6V555.1M455.2 537.4V553.0M460.5 535.3V550.8M465.8 533.1V548.7M471.1 531.0V546.5M476.4 528.8V544.3M481.7 526.7V542.2M487.0 524.5V540.0M492.3 522.4V537.9M497.6 520.2V535.7M502.9 518.1V533.6M508.2 516.0V531.4M513.5 513.8V529.3M518.8 511.7V527.1M524.1 509.5V524.9M529.4 507.4V522.8M534.7 508.3V520.6M540.0 510.5V518.5M545.3 512.8V516.3" fill="none" stroke="#114fcc" stroke-width="1.6"/><polygon points="335.4,586.0 352.6,594.7 549.5,514.6 531.0,506.7" fill="none" stroke="#114fcc" stroke-width="1.5" stroke-linejoin="round"/><path d="M299.6 644.8V647.5M304.9 642.6V649.8M310.2 640.5V652.2M315.5 638.3V653.5M320.8 636.2V651.3M326.1 634.0V649.2M331.4 631.9V647.0M336.7 629.7V644.8M342.0 627.5V642.7M347.3 625.4V640.5M352.6 623.2V638.3M357.9 621.1V636.1M363.2 618.9V634.0M368.5 616.7V631.8M373.8 614.6V629.6M379.1 612.4V627.4M384.4 610.3V625.3M389.7 608.1V623.1M395.0 605.9V620.9M400.3 603.8V618.8M405.6 601.6V616.6M410.9 599.5V614.4M416.2 597.3V612.2M421.5 595.2V610.1M426.8 593.0V607.9M432.1 590.8V605.7M437.4 588.7V603.6M442.7 586.5V601.4M448.0 584.4V599.2M453.3 582.2V597.0M458.6 580.0V594.9M463.9 577.9V592.7M469.2 575.7V590.5M474.5 573.6V588.3M479.8 571.4V586.2M485.1 569.2V584.0M490.4 567.1V581.8M495.7 567.3V579.7M501.0 569.5V577.5M506.3 571.7V575.3" fill="none" stroke="#114fcc" stroke-width="1.6"/><path d="M296.4 646.1L492.8 566.1" fill="none" stroke="#9fb0d4" stroke-width="1.2"/><path d="M296.4 646.1L314.3 654.0L510.7 573.5L492.8 566.1" fill="none" stroke="#114fcc" stroke-width="1.5" stroke-linejoin="round"/><polygon points="888.2,307.1 1082.2,226.6 1082.2,377.6 888.2,457.0" fill="#5c98e3" filter="url(#bluestone)"/><polygon points="878.8,303.5 1075.0,223.0 1082.2,226.6 888.2,307.1" fill="#5793e1"/><polygon points="878.8,303.5 888.2,307.1 888.2,457.0 878.8,452.7" fill="#74aef6"/><g fill="none" stroke="#1e73e8" stroke-width="1" stroke-dasharray="7 4"><path d="M1075.7 231V373.2L888.6 449.4"/></g><path d="M1075.7 373.2L1082.2 377.6M1075.5 224V231" fill="none" stroke="#1e73e8" stroke-width="1"/><g fill="none" stroke="#1e73e8" stroke-width="2" stroke-linejoin="round"><polygon points="878.8,303.5 1075.0,223.0 1082.2,226.6 1082.2,377.6 888.2,457.0 878.8,452.7"/><path d="M888.2 457V307.1L1082.2 226.6M888.2 307.1L878.8 303.5"/></g><defs><linearGradient id="gz" x1="0" y1="0" x2="1" y2="0"><stop offset="0" stop-color="#c81414"/><stop offset="0.5" stop-color="#ff4a4a"/><stop offset="1" stop-color="#d81818"/></linearGradient></defs>
<path d="M769.2 570.3L794.1 573.9L803.2 585L787.9 583.9Z" fill="#0a0ad0"/><path d="M787 578L803 585.4L798 578.5Z" fill="#1414f0"/>
<path d="M837.7 569.9L813.9 575L803.4 585.2L818.4 583.9Z" fill="#10b818"/><path d="M803.4 585.2L820 577.4L822 580.2Z" fill="#20e028"/>
<rect x="801.3" y="567" width="3.8" height="18.4" fill="url(#gz)"/>
<path d="M797.8 568.2H808.8L803.5 540.2Z" fill="url(#gz)"/></svg>
<div class="t" style="left:803.6px;top:521.97px;font-size:16.5px;line-height:18.96px;letter-spacing:0.000px;color:#ee1c1c;font-weight:bold;transform:scaleX(1.17);transform-origin:0 0;">Z</div>
<div class="t" style="left:768.9px;top:551.97px;font-size:16.5px;line-height:18.96px;letter-spacing:0.000px;color:#1060f0;font-weight:bold;transform:scaleX(1.13);transform-origin:0 0;">Y</div>
<div class="t" style="left:840.9px;top:553.12px;font-size:16px;line-height:18.38px;letter-spacing:0.000px;color:#30c010;font-weight:bold;transform:scaleX(1.08);transform-origin:0 0;">X</div>
</body></html>
